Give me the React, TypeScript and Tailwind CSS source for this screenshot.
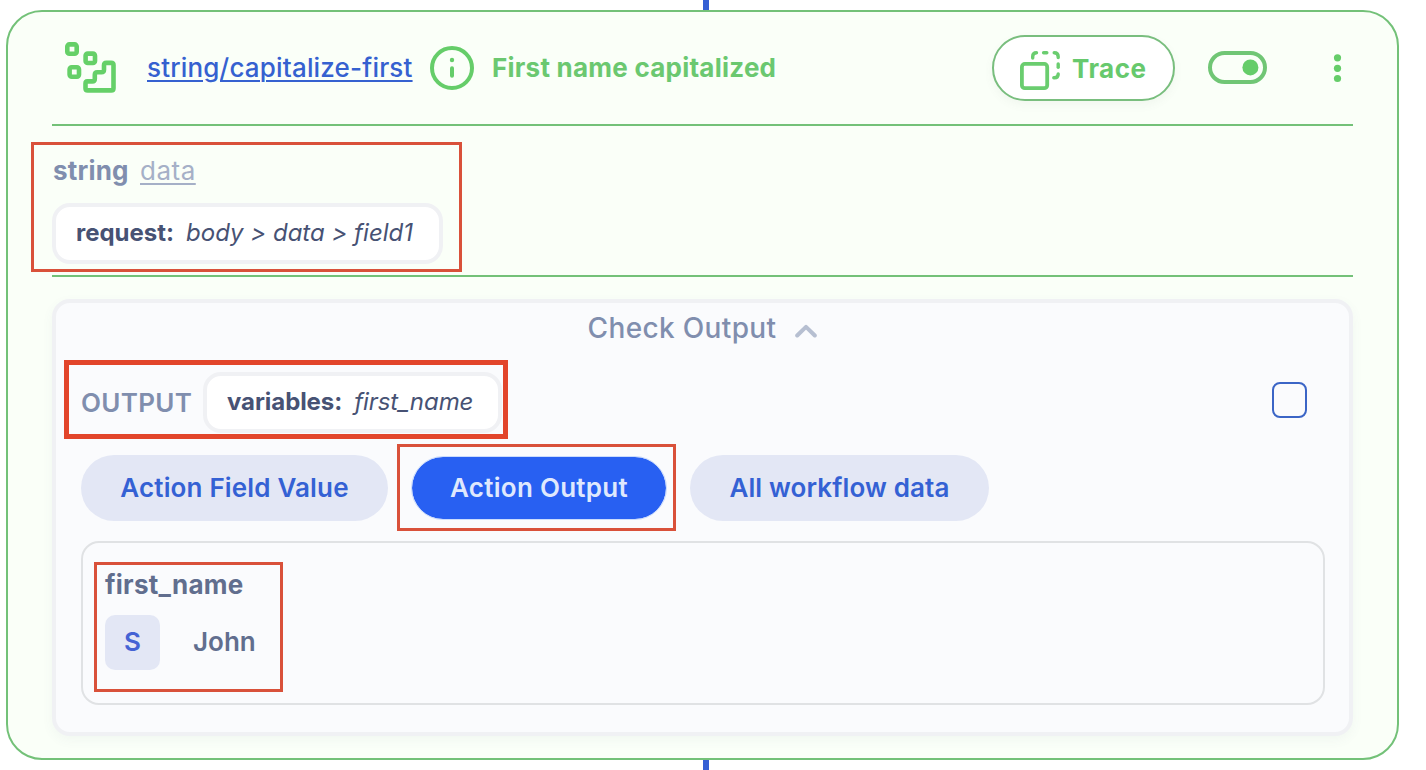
import type { ReactNode } from "react";

function StepsIcon() {
  return (
    <svg className="h-[54px] w-[54px] shrink-0" viewBox="0 0 54 54" fill="none" stroke="#65d068" strokeWidth="4.6" strokeLinejoin="round">
      <rect x="3.3" y="3.4" width="9.4" height="9.4" rx="2.1" />
      <rect x="21.6" y="12.6" width="9.4" height="9.4" rx="2.1" />
      <rect x="5.6" y="26.3" width="9.4" height="9.4" rx="2.1" />
      <path d="M23.2 40.4h5.1q2.5 0 2.5-2.5v-4.2q0-2.5 2.5-2.5h4.2q2.5 0 2.5-2.5v-4.4q0-2.4 2.4-2.4h4.9q2.2 0 2.2 2.2v23.1q0 2.2-2.2 2.2h-23.6q-2.2 0-2.2-2.2v-4.6q0-2.2 1.7-2.2z" />
    </svg>
  );
}

function InfoIcon() {
  return (
    <svg className="h-[44px] w-[44px] shrink-0" viewBox="0 0 44 44" fill="none">
      <circle cx="22" cy="22" r="20" stroke="#65cd69" strokeWidth="4" />
      <circle cx="22" cy="14" r="2.2" fill="#65cd69" />
      <path d="M22 22.3v7.5" stroke="#65cd69" strokeWidth="4" strokeLinecap="round" />
    </svg>
  );
}

function TraceIcon() {
  return (
    <svg className="h-[46px] w-[42px] shrink-0" viewBox="0 0 42 46" fill="none" stroke="#6acd6f" strokeLinecap="round">
      <rect x="2.9" y="18.9" width="25.3" height="24.3" rx="3" strokeWidth="3.8" />
      <g strokeWidth="3.4">
        <path d="M13.7 13v-1.5q0-3.8 3.8-3.8" />
        <path d="M24.6 7.7h3.2" />
        <path d="M35.2 7.7q4 0 4 4v.8" />
        <path d="M39.2 19v3.2" />
        <path d="M39.2 29q0 3.8-3.8 3.8h-.6" />
      </g>
    </svg>
  );
}

function ToggleIcon() {
  return (
    <svg className="h-[34px] w-[59px] shrink-0" viewBox="0 0 59 34" fill="none">
      <rect x="2" y="2" width="55" height="29" rx="14.5" stroke="#70c675" strokeWidth="4" />
      <circle cx="42.4" cy="16.4" r="8" fill="#65cd69" />
    </svg>
  );
}

function DotsIcon() {
  return (
    <svg className="h-[34px] w-[11px] shrink-0" viewBox="0 0 11 34" fill="#65cd69">
      <circle cx="5.5" cy="6.8" r="3.6" />
      <circle cx="5.5" cy="17.3" r="3.6" />
      <circle cx="5.5" cy="27.5" r="3.6" />
    </svg>
  );
}

function Chip({ name, value, className }: { name: string; value: string; className: string }) {
  return (
    <div className={`flex h-[61px] items-center whitespace-nowrap rounded-[18px] border-4 border-[#f0f1f4] bg-white pb-[2px] pl-5 text-[24px] text-[#475274] ${className}`}>
      <span className="font-bold">{name}</span>
      <span className="ml-[12px] italic">{value}</span>
    </div>
  );
}

function Highlight({ className }: { className: string }) {
  return <div className={`pointer-events-none absolute ${className}`} />;
}

function Tab({ className, children }: { className: string; children: ReactNode }) {
  return <button className={`flex items-center justify-center whitespace-nowrap rounded-full pb-[2px] text-[26px] ${className}`}>{children}</button>;
}

export default function App() {
  return (
    <div className="relative flex h-[770px] w-[1426px] flex-col overflow-hidden bg-white font-['Inter',sans-serif]">
      <div className="ml-[703px] h-[10px] w-[6px] bg-[#3560d4]" />
      <main className="ml-[6px] h-[750px] w-[1393px] rounded-[36px] border-2 border-[#73c178] bg-[#fafff8] px-[44px]">
        <header className="flex h-[114px] items-center border-b-2 border-[#73c178] pl-3">
          <StepsIcon />
          <a className="mb-[2px] ml-[29px] w-[283px] whitespace-nowrap text-[26px] font-[450] tracking-[0.18px] text-[#3561d0] underline decoration-2 underline-offset-[3px]">string/capitalize-first</a>
          <InfoIcon />
          <h1 className="mb-[2px] ml-[18px] text-[26px] font-bold tracking-[0.24px] text-[#6bc870]">First name capitalized</h1>
          <div className="ml-auto flex items-center">
            <button className="flex h-[66px] w-[183px] items-center rounded-full border-2 border-[#79be7e] bg-white pl-[25px] text-[26px] font-bold tracking-[0.5px] text-[#67c96d] shadow-[0_4px_10px_rgba(100,120,100,0.06)]">
              <TraceIcon />
              <span className="ml-[11px] pt-px">Trace</span>
            </button>
            <div className="ml-[33px] flex"><ToggleIcon /></div>
            <div className="mr-[10px] ml-[65px] flex"><DotsIcon /></div>
          </div>
        </header>

        <section className="h-[151px] border-b-2 border-[#73c178] pt-[27px]">
          <div className="flex h-[34px] items-center gap-[11px] text-[26px]">
            <span className="w-[77px] pl-px font-bold tracking-[0.2px] text-[#808eae]">string</span>
            <span className="tracking-[0.5px] text-[#a5b0c7] underline decoration-2 underline-offset-[3px]">data</span>
          </div>
          <Chip name="request:" value="body > data > field1" className="mt-[16px] w-[391px]" />
        </section>

        <section className="mt-[22px] h-[437px] rounded-[18px] border-4 border-[#f0f1f4] bg-[#fafbfd] shadow-[0_4px_12px_rgba(80,90,110,0.05)]">
          <div className="flex h-[50px] items-center justify-center text-[28px] tracking-[0.35px] text-[#808eae]">
            <span className="font-medium">Check Output</span>
            <svg className="mt-[5px] ml-[19px] h-[14px] w-[22px]" viewBox="0 0 22 14" fill="none" stroke="#b6bfd1" strokeWidth="4" strokeLinecap="round" strokeLinejoin="round">
              <path d="M2.2 11.5 11 2.8l8.8 8.7" />
            </svg>
          </div>
          <div className="mt-[19px] flex h-[61px] items-center pr-[42px] pl-[25px]">
            <span className="w-[122px] text-[26px] font-semibold tracking-[0.3px] text-[#808eae]">OUTPUT</span>
            <Chip name="variables:" value="first_name" className="w-[299px] tracking-[-0.07px]" />
            <span className="mb-[5px] ml-auto h-9 w-[35px] rounded-[8px] border-2 border-[#3b65c6]" />
          </div>
          <div className="mt-[22px] flex h-[66px] items-start gap-[23px] pl-[25px]">
            <Tab className="h-[66px] w-[307px] bg-[#e3e7f5] font-semibold tracking-[0.16px] text-[#3461d4]">Action Field Value</Tab>
            <Tab className="mt-px h-[64px] w-[256px] border border-[#cbdcfc] bg-[#2860f2] bg-clip-padding font-semibold tracking-[0.27px] text-[#dfe8fd]">Action Output</Tab>
            <Tab className="h-[66px] w-[299px] bg-[#e3e7f5] font-semibold tracking-[0.13px] text-[#3461d4]">All workflow data</Tab>
          </div>
          <div className="mt-[20px] ml-[25px] h-[164px] w-[1244px] rounded-[18px] border-2 border-[#e0e2e4] pt-[25px] pl-[22px] text-[26px] text-[#616e8e]">
            <div className="h-[34px] leading-[34px] font-bold tracking-[0.24px]">first_name</div>
            <div className="mt-[13px] flex items-center">
              <span className="flex h-[55px] w-[55px] items-center justify-center rounded-[10px] bg-[#e3e7f5] pb-[2px] font-semibold text-[#4563d4]">S</span>
              <span className="mb-[2px] ml-[33px] font-semibold">John</span>
            </div>
          </div>
        </section>
      </main>
      <div className="ml-[703px] h-[10px] w-[6px] bg-[#3560d4]" />

      <Highlight className="top-[142px] left-[31px] h-[130px] w-[431px] border-[3px] border-[#d9513a]" />
      <Highlight className="top-[360px] left-[64px] h-[79px] w-[444px] border-[5px] border-[#e2452b]" />
      <Highlight className="top-[444px] left-[397px] h-[87px] w-[279px] border-[3px] border-[#d9513a]" />
      <Highlight className="top-[562px] left-[94px] h-[130px] w-[189px] border-[3px] border-[#d9513a]" />
    </div>
  );
}
